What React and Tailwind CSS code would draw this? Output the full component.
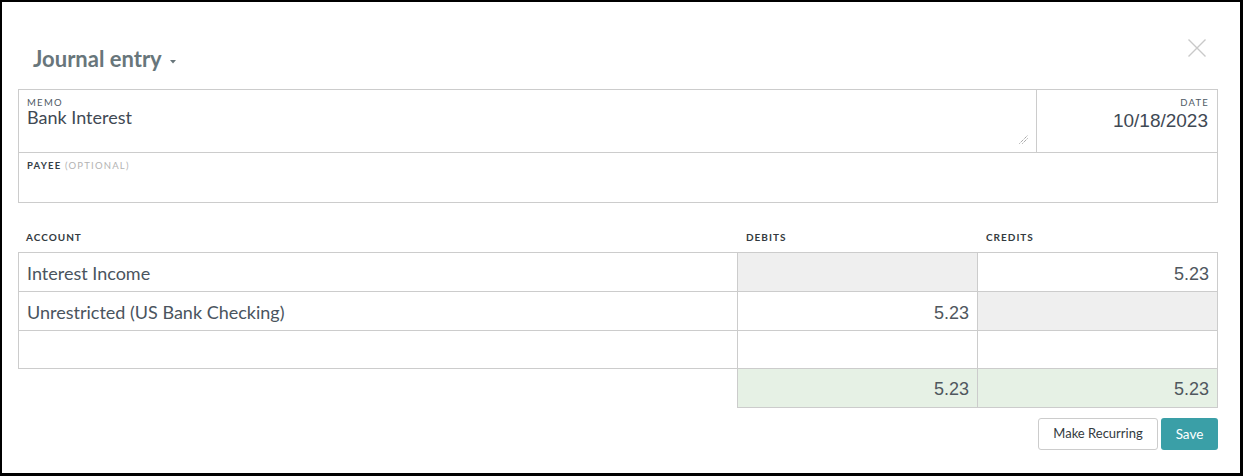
export default function App() {
  const rows = [
    { account: 'Interest Income', debit: null, credit: '5.23', h: 'h-[39px]' },
    { account: 'Unrestricted (US Bank Checking)', debit: '5.23', credit: null, h: 'h-[39px]' },
    { account: '', debit: '', credit: '', h: 'h-[38px]' },
  ];

  const numCell = (value, extra) => (
    <div
      className={`${extra} border-t border-l border-[#cccccc] pr-2 pt-[9px] text-right font-['Liberation_Sans',Arial,sans-serif] text-[18px] leading-[24px] text-[#50575e] ${
        value === null ? 'bg-[#efefef]' : 'bg-white'
      }`}
    >
      {value}
    </div>
  );

  return (
    <div className="w-[1243px] h-[476px] bg-white border-black border-t-2 border-l-2 border-r-[3px] border-b-[3px] pl-4 pr-[22px] font-['Lato',sans-serif]">
      {/* header */}
      <div className="flex justify-between h-[87px]">
        <div className="pt-[43px] pl-[15px] flex items-start">
          <h2 className="text-[22px] font-bold leading-[28px] text-[#68767b]">Journal entry</h2>
          <svg width="6" height="4" viewBox="0 0 6 4" className="ml-[8px] mt-[15px]">
            <path d="M0 0 L6 0 L3 3.5 Z" fill="#68767b" />
          </svg>
        </div>
        <div className="pt-[37px] pr-[12px]">
          <svg width="18" height="18" viewBox="0 0 18 18">
            <path d="M0.5 0.5 L17.5 17.5 M17.5 0.5 L0.5 17.5" stroke="#c9c9c9" strokeWidth="1.4" />
          </svg>
        </div>
      </div>

      {/* memo / date / payee */}
      <div className="border border-[#cccccc]">
        <div className="flex h-[63px] border-b border-[#cccccc]">
          <div className="relative flex-1 pl-2 pt-[7px]">
            <div className="text-[9.5px] leading-[12px] tracking-[1.3px] text-[#4e5964]">MEMO</div>
            <div className="text-[18px] leading-[17px] text-[#3f4954]">Bank Interest</div>
            <svg width="9" height="9" viewBox="0 0 9 9" className="absolute right-2 bottom-2">
              <path d="M0.5 8.5 L8.5 0.5 M3.5 8.5 L8.5 3.5" stroke="#808080" strokeWidth="1" strokeDasharray="1 1" />
            </svg>
          </div>
          <div className="w-[181px] border-l border-[#cccccc] pr-[9px] pt-[7px] text-right">
            <div className="text-[9.5px] leading-[12px] tracking-[1.2px] text-[#4e5964] -mr-[1px]">DATE</div>
            <div className="font-['Liberation_Sans',Arial,sans-serif] text-[19px] leading-[23px] text-[#3f4954]">10/18/2023</div>
          </div>
        </div>
        <div className="h-[49px] pl-2 pt-[7px] text-[9.5px] leading-[12px] tracking-[1.2px]">
          <span className="font-bold text-[#333d47]">PAYEE</span>{' '}
          <span className="text-[#b3b3b3]">(OPTIONAL)</span>
        </div>
      </div>

      {/* table header */}
      <div className="flex pt-[28px] pb-[9px] text-[10px] leading-[12px] tracking-[1px] font-bold text-[#333a40]">
        <div className="flex-1 pl-2">ACCOUNT</div>
        <div className="w-[240px] pl-[9px]">DEBITS</div>
        <div className="w-[241px] pl-[9px]">CREDITS</div>
      </div>

      {/* rows */}
      {rows.map((row, i) => (
        <div key={i} className={`flex ${row.h}`}>
          <div className="flex-1 border-t border-l border-[#cccccc] pl-2 pt-[8px] text-[18px] leading-[24px] text-[#4a545e]">
            {row.account}
          </div>
          {numCell(row.debit, 'w-[240px]')}
          {numCell(row.credit, 'w-[241px] border-r')}
        </div>
      ))}

      {/* totals */}
      <div className="flex h-[40px]">
        <div className="flex-1 border-t border-[#cccccc]"></div>
        <div className="w-[240px] border border-r-0 border-[#cccccc] bg-[#e6f1e5] pr-2 pt-[8px] text-right font-['Liberation_Sans',Arial,sans-serif] text-[18px] leading-[24px] text-[#50575e]">
          5.23
        </div>
        <div className="w-[241px] border border-[#cccccc] bg-[#e6f1e5] pr-2 pt-[8px] text-right font-['Liberation_Sans',Arial,sans-serif] text-[18px] leading-[24px] text-[#50575e]">
          5.23
        </div>
      </div>

      {/* actions */}
      <div className="flex justify-end gap-[3px] mt-[10px]">
        <button className="w-[120px] h-[32px] border border-[#cccccc] rounded-[3px] bg-white text-[13px] text-[#333a40]">
          Make Recurring
        </button>
        <button className="w-[57px] h-[32px] rounded-[3px] bg-[#3a9fa7] text-[13.5px] text-white">
          Save
        </button>
      </div>
    </div>
  );
}
